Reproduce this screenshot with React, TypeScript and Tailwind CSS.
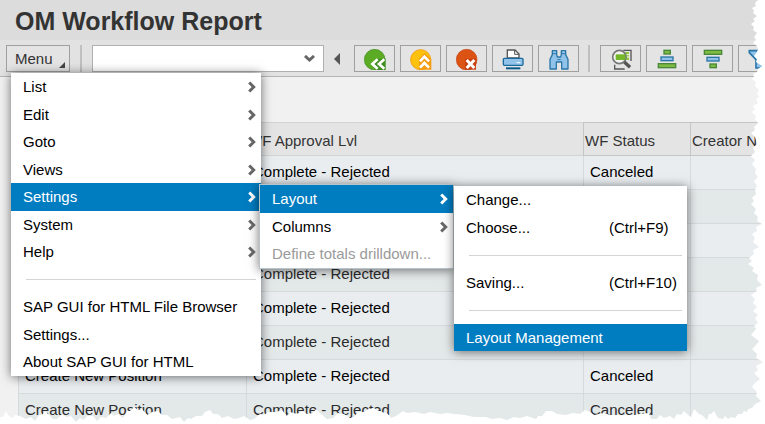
import { ReactNode } from "react";

const rows = Array.from({ length: 8 }, (_, i) => ({
  id: i,
  action: "Create New Position",
  level: "Complete - Rejected",
  status: "Canceled",
}));

const tornEdge =
  "M765 0H758L755 3 756 6 752 8 754 11 753 13 757 16 753 19 755 21 751 24 754 27 753 30 757 33 754 37 756 40 753 43 757 46 758 49 757 52 754 56 757 59 756 62 762 66 758 69 757 72 753 74 754 77 752 79 756 82 755 86 759 90 757 94 759 97 756 99 758 103 753 106 755 109 752 112 756 116 755 119 758 123 754 127 755 130 751 133 755 137 756 140 757 144 753 148 755 152 751 156 755 160 752 164 756 169 755 173 758 177 754 181 757 186 755 190 756 194 752 198 754 201 751 204 756 209 754 213 758 217 757 221 762 224 756 227 757 231 752 234 755 238 753 242 759 247 753 250 754 254 749 258 752 261 748 264 754 268 752 271 758 275 757 280 762 285 756 288 757 291 751 295 755 299 753 303 757 307 753 311 758 315 755 318 758 323 754 326 756 329 751 335 759 341 756 345 752 349 757 354 756 358 763 362 756 366 758 370 754 373 760 379 755 383 752 387 757 392 756 396 761 401 755 404 752 408 748 409 747 412 744 411 742 414 738 414 735 418 731 417 728 419 725 416 723 419 718 418 714 411 711 414 709 414 707 420 702 415 699 414 694 409 691 417 688 415 684 411 681 415 677 414 674 419 670 416 664 418 660 415 657 419 651 419 649 413 640 414 635 415 625 415 610 415 604 413 594 415 590 412 585 410 580 414 573 413 566 415 557 414 552 411 546 411 542 416 538 416 536 419 527 416 520 418 514 417 507 420 500 418 492 419 486 417 474 417 465 415 455 414 447 413 440 414 430 412 424 414 415 412 407 413 403 411 396 416 391 418 387 413 381 412 374 408 369 409 364 412 358 412 354 417 350 418 344 414 338 413 333 418 327 419 321 414 316 409 313 413 307 414 302 411 297 414 290 412 287 416 282 410 276 412 268 412 264 415 260 414 254 419 250 420 244 416 239 418 234 419 228 416 222 418 218 414 213 414 210 410 205 412 202 416 196 416 191 419 188 418 184 422 180 417 172 419 167 415 162 415 158 411 152 412 147 415 142 409 138 410 134 407 130 411 127 411 123 418 118 414 114 416 111 413 106 418 101 417 97 421 93 416 87 416 84 420 80 418 76 422 71 416 66 417 62 414 57 419 53 419 49 415 45 411 42 415 39 415 35 421 31 417 26 419 20 416 15 415 12 418 9 416 6 411 3 417 0 417V424H765Z";

function Chevron() {
  return (
    <svg className="h-3 w-2 shrink-0" viewBox="0 0 8 12" fill="none" stroke="currentColor" strokeWidth="3" aria-hidden="true">
      <path d="M1.2 1.5 5.7 6 1.2 10.5" />
    </svg>
  );
}

function Icon({ children }: { children: ReactNode }) {
  return (
    <svg className="h-[22px] w-[22px]" viewBox="0 0 66 66" fill="none" aria-hidden="true">
      {children}
    </svg>
  );
}

function ToolButton({ label, children }: { label: string; children: ReactNode }) {
  return (
    <button
      aria-label={label}
      className="flex h-[27px] w-[41px] shrink-0 items-center justify-center border border-[#a0a0a0] bg-[#e4e4e4]"
    >
      {children}
    </button>
  );
}

function Separator() {
  return (
    <li role="separator" className="flex odd:h-7 even:h-[27px] items-center pl-[15px] pr-[5px]">
      <div className="h-px w-full bg-[#d4d4d4]"></div>
    </li>
  );
}

type ItemProps = {
  label: string;
  shortcut?: string;
  arrow?: boolean;
  active?: boolean;
  disabled?: boolean;
  children?: ReactNode;
};

function MenuItem({ label, shortcut, arrow, active, disabled, children }: ItemProps) {
  return (
    <li role="none" className="relative odd:h-7 even:h-[27px]">
      <button
        role="menuitem"
        disabled={disabled}
        className={`flex h-full w-full items-center whitespace-nowrap pl-3 pr-[5px] text-left ${
          active ? "bg-[#007cc0] text-white" : disabled ? "text-[#9a9a9a]" : "text-black"
        }`}
      >
        <span className="flex-1">{label}</span>
        {shortcut && <span className="w-[73px]">{shortcut}</span>}
        {arrow && (
          <span className={active ? "text-white" : "text-[#666]"}>
            <Chevron />
          </span>
        )}
      </button>
      {children}
    </li>
  );
}

function MainMenu() {
  return (
    <ul role="menu" className="absolute left-[5px] top-full z-10 mt-px w-[250px] bg-white shadow-[0_1px_10px_rgba(0,0,0,0.55)]">
      <MenuItem label="List" arrow />
      <MenuItem label="Edit" arrow />
      <MenuItem label="Goto" arrow />
      <MenuItem label="Views" arrow />
      <MenuItem label="Settings" arrow active>
        <ul role="menu" className="absolute left-[248px] top-px w-[195px] border border-[#b8c4cc] bg-white shadow-[0_1px_10px_rgba(0,0,0,0.55)]">
          <MenuItem label="Layout" arrow active>
            <ul role="menu" className="absolute left-[194px] top-px w-[233px] bg-white shadow-[0_1px_10px_rgba(0,0,0,0.55)]">
              <MenuItem label="Change..." />
              <MenuItem label="Choose..." shortcut="(Ctrl+F9)" />
              <Separator />
              <MenuItem label="Saving..." shortcut="(Ctrl+F10)" />
              <Separator />
              <MenuItem label="Layout Management" active />
            </ul>
          </MenuItem>
          <MenuItem label="Columns" arrow />
          <MenuItem label="Define totals drilldown..." disabled />
        </ul>
      </MenuItem>
      <MenuItem label="System" arrow />
      <MenuItem label="Help" arrow />
      <Separator />
      <MenuItem label="SAP GUI for HTML File Browser" />
      <MenuItem label="Settings..." />
      <MenuItem label="About SAP GUI for HTML" />
    </ul>
  );
}

function Toolbar() {
  return (
    <div className="flex h-[37px] items-center border-b border-[#b4b4b4] bg-[#e2e2e2] pl-[6px] pt-px">
      <div className="relative shrink-0">
        <button
          aria-haspopup="menu"
          aria-expanded="true"
          className="relative flex h-[27px] w-16 items-center border border-[#a0a0a0] bg-[#e4e4e4] pl-2 text-[#333]"
        >
          Menu
          <svg className="absolute bottom-[3px] right-1 h-[6px] w-[6px]" viewBox="0 0 6 6" aria-hidden="true">
            <path d="M6 0V6H0Z" fill="#444" />
          </svg>
        </button>
        <MainMenu />
      </div>
      <div className="ml-[10px] h-[27px] w-[2px] shrink-0 bg-[#bfbfbf]"></div>
      <div className="ml-[10px] flex h-[27px] w-[232px] shrink-0 items-center border border-[#b0b0b0] bg-white">
        <input type="text" aria-label="Command" className="h-full min-w-0 flex-1 px-1 outline-none" />
        <button aria-label="Show history" className="mr-2 text-[#666]">
          <svg className="h-[7px] w-[11px]" viewBox="0 0 11 7" fill="none" stroke="currentColor" strokeWidth="3" aria-hidden="true">
            <path d="M1 1 5.5 5 10 1" />
          </svg>
        </button>
      </div>
      <button aria-label="Collapse command field" className="ml-[10px] mr-[14px] shrink-0">
        <svg className="h-3 w-[6px]" viewBox="0 0 6 12" aria-hidden="true">
          <path d="M6 0V12L0 6Z" fill="#555" />
        </svg>
      </button>
      <div className="flex gap-[5px]">
        <ToolButton label="Back">
          <Icon>
            <circle cx="32" cy="35" r="31" fill="#5cab25" stroke="#3e8e20" strokeWidth="2" />
            <path d="M65 32H40L18 48 38 66H65Z" fill="#3e8e20" />
            <path d="M41 34 25 48 41 62M61 34 45 48 61 62" stroke="#fff" strokeWidth="8" />
          </Icon>
        </ToolButton>
        <ToolButton label="Exit">
          <Icon>
            <circle cx="32" cy="35" r="30" fill="#fcc20d" stroke="#f5a011" strokeWidth="3" />
            <path d="M43 15 64 34V65H27V32Z" fill="#f59d10" />
            <path d="M30 40 43 26 57 40M30 59 43 45 57 59" stroke="#fff" strokeWidth="8" />
          </Icon>
        </ToolButton>
        <ToolButton label="Cancel">
          <Icon>
            <circle cx="32" cy="35" r="31" fill="#dc5413" stroke="#c43f10" strokeWidth="2" />
            <path d="M27 32H60V65H27Z" fill="#c8400f" />
            <path d="M32 36 55 60M55 36 32 60" stroke="#fff" strokeWidth="9" />
          </Icon>
        </ToolButton>
        <ToolButton label="Print">
          <Icon>
            <path d="M16 30V6H39L51 18V30Z" fill="#fff" stroke="#555" strokeWidth="4" />
            <path d="M38 6V19H51" stroke="#555" strokeWidth="3" />
            <rect x="4" y="31" width="59" height="21" rx="3" fill="#91c3ea" stroke="#1c6a9c" strokeWidth="4" />
            <path d="M44 44H55" stroke="#fff" strokeWidth="3" />
            <path d="M12 61H55" stroke="#085b8c" strokeWidth="6" />
          </Icon>
        </ToolButton>
        <ToolButton label="Find">
          <Icon>
            <path
              d="M13 8H26V20L28 27H38L40 20V8H53V20L60 34V63H41V42H25V63H6V34L13 20Z"
              fill="#91c3ea"
              stroke="#2a76a8"
              strokeWidth="4"
              strokeLinejoin="round"
            />
            <path d="M13 17H26M40 17H53M28 35H38" stroke="#2a76a8" strokeWidth="3" />
          </Icon>
        </ToolButton>
      </div>
      <div className="ml-[9px] mr-[10px] h-[27px] w-[2px] shrink-0 bg-[#bfbfbf]"></div>
      <div className="flex min-w-0 flex-1 gap-[5px] overflow-hidden">
        <ToolButton label="Details">
          <Icon>
            <path d="M40 7H63V39M14 50V63H44" stroke="#555" strokeWidth="4" />
            <path d="M44 12H57V36H44Z" fill="#8cc63e" />
            <path d="M50 20H58M50 27H58" stroke="#fff" strokeWidth="3" />
            <circle cx="28" cy="27" r="20" fill="#f4f4f4" stroke="#777" strokeWidth="5" />
            <path d="M17 19H46V36H17Z" fill="#74b82a" />
            <path d="M43 42 60 58" stroke="#555" strokeWidth="10" />
          </Icon>
        </ToolButton>
        <ToolButton label="Sort in ascending order">
          <Icon>
            <rect x="24" y="7" width="19" height="11" fill="#7fba42" stroke="#47883a" strokeWidth="4" />
            <rect x="15" y="27" width="36" height="11" fill="#91c3ea" stroke="#2a76a8" strokeWidth="4" />
            <rect x="7" y="47" width="52" height="12" fill="#7fba42" stroke="#47883a" strokeWidth="4" />
          </Icon>
        </ToolButton>
        <ToolButton label="Sort in descending order">
          <Icon>
            <rect x="7" y="7" width="52" height="12" fill="#7fba42" stroke="#47883a" strokeWidth="4" />
            <rect x="15" y="28" width="36" height="11" fill="#91c3ea" stroke="#2a76a8" strokeWidth="4" />
            <rect x="24" y="48" width="19" height="11" fill="#7fba42" stroke="#47883a" strokeWidth="4" />
          </Icon>
        </ToolButton>
        <ToolButton label="Set filter">
          <Icon>
            <path d="M4 8H62V14L42 35V60H24V35L4 14Z" fill="#91c3ea" stroke="#2a76a8" strokeWidth="5" />
          </Icon>
        </ToolButton>
      </div>
    </div>
  );
}

function ReportTable() {
  return (
    <div className="pl-[18px] pt-[45px]">
      <table className="w-full table-fixed border-separate border-spacing-0 text-left">
        <colgroup>
          <col className="w-[228px]" />
          <col className="w-[337px]" />
          <col className="w-[107px]" />
          <col />
        </colgroup>
        <thead>
          <tr className="h-[34px] bg-[#e4e4e4] text-[#333]">
            <th className="border-y border-l border-[#d2d4d4] px-px pt-1 font-normal">Action</th>
            <th className="border-y border-l border-[#d2d4d4] px-px pt-1 font-normal">WF Approval Lvl</th>
            <th className="border-y border-l border-[#c4c6c6] px-px pt-1 font-normal">WF Status</th>
            <th className="whitespace-nowrap border-y border-l border-[#c4c6c6] px-px pt-1 font-normal">Creator N</th>
          </tr>
        </thead>
        <tbody>
          {rows.map((row) => (
            <tr key={row.id} className="h-[34px] text-black odd:bg-[#e9edf0] even:bg-[#e3e8e9] even:text-[#2b2b2b]">
              <td className="border-b border-l border-[#d6dadc] px-[6px] pb-[2px]">{row.action}</td>
              <td className="border-b border-l border-[#d6dadc] px-[6px] pb-[2px]">{row.level}</td>
              <td className="border-b border-l border-[#d6dadc] px-[6px] pb-[2px]">{row.status}</td>
              <td className="border-b border-l border-[#d6dadc] px-[6px] pb-[2px]"></td>
            </tr>
          ))}
        </tbody>
      </table>
    </div>
  );
}

export default function App() {
  return (
    <div className="relative h-screen w-full overflow-hidden bg-[#f1f1f1] font-['Liberation_Sans',Arial,sans-serif] text-[15px] leading-5">
      <header className="flex h-10 items-center bg-[#dcdcdc] pl-[15px]">
        <h1 className="whitespace-nowrap pt-[2px] text-[25px] font-bold leading-7 text-[#333]">OM Workflow Report</h1>
      </header>
      <Toolbar />
      <ReportTable />
      <svg
        className="pointer-events-none absolute inset-0 h-full w-full"
        viewBox="0 0 765 424"
        preserveAspectRatio="none"
        aria-hidden="true"
      >
        <path d={tornEdge} fill="#fff" />
      </svg>
    </div>
  );
}
